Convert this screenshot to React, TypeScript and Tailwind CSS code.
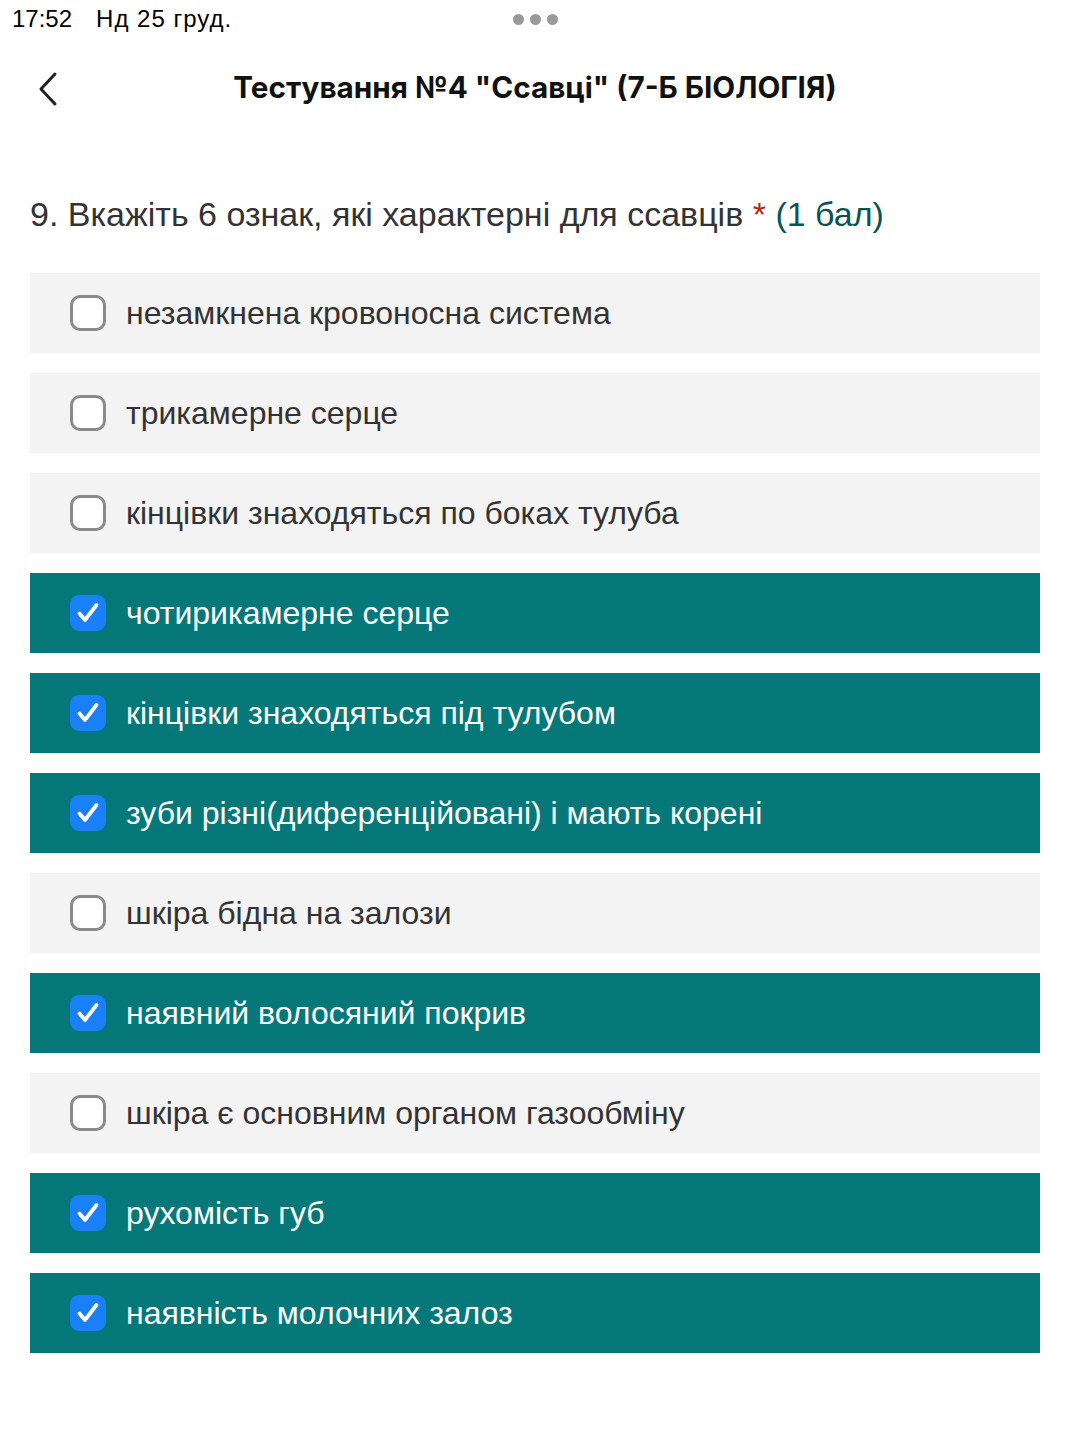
import React from "react";

const options: { text: string; checked: boolean }[] = [
  { text: "незамкнена кровоносна система", checked: false },
  { text: "трикамерне серце", checked: false },
  { text: "кінцівки знаходяться по боках тулуба", checked: false },
  { text: "чотирикамерне серце", checked: true },
  { text: "кінцівки знаходяться під тулубом", checked: true },
  { text: "зуби різні(диференційовані) і мають корені", checked: true },
  { text: "шкіра бідна на залози", checked: false },
  { text: "наявний волосяний покрив", checked: true },
  { text: "шкіра є основним органом газообміну", checked: false },
  { text: "рухомість губ", checked: true },
  { text: "наявність молочних залоз", checked: true },
];

function Box({ checked }: { checked: boolean }) {
  if (checked) {
    return (
      <div className="w-[36px] h-[36px] rounded-[9px] bg-[#1a80f8] flex items-center justify-center shrink-0">
        <svg width="28" height="28" viewBox="0 0 28 28" fill="none">
          <path d="M5.5 14.5 L11 21 L22.5 6" stroke="white" strokeWidth="3.8" strokeLinecap="round" strokeLinejoin="round" />
        </svg>
      </div>
    );
  }
  return <div className="w-[36px] h-[36px] rounded-[10px] border-[3px] border-[#8a8a8a] bg-white shrink-0" />;
}

export default function App() {
  return (
    <div className="w-[1070px] h-[1443px] bg-white overflow-hidden" style={{ fontFamily: '"Liberation Sans", Arial, sans-serif' }}>
      <div className="h-[38px] flex items-center px-[12px] relative">
        <span className="text-[24px] text-black">17:52</span>
        <span className="text-[24px] text-black ml-[24px] tracking-[1px]">Нд 25 груд.</span>
        <div className="absolute left-[513px] top-[14px] flex gap-[6px]">
          <div className="w-[11px] h-[11px] rounded-full bg-[#9a9a9a]" />
          <div className="w-[11px] h-[11px] rounded-full bg-[#9a9a9a]" />
          <div className="w-[11px] h-[11px] rounded-full bg-[#9a9a9a]" />
        </div>
      </div>
      <div className="h-[100px] relative flex items-center justify-center pb-[2px]">
        <svg className="absolute left-[36px] top-[33px]" width="24" height="36" viewBox="0 0 24 36" fill="none">
          <path d="M19 3 L5 18 L19 33" stroke="#222" strokeWidth="3" strokeLinecap="round" strokeLinejoin="round" />
        </svg>
        <div className="text-[29.7px] font-bold text-[#111]" style={{ fontFamily: 'Inter, "Liberation Sans", sans-serif' }}>
          Тестування №4 "Ссавці" (7-Б БІОЛОГІЯ)
        </div>
      </div>
      <div className="px-[30px] pt-[56px]">
        <div className="text-[34px] text-[#333] leading-[40px]">
          9. Вкажіть 6 ознак, які характерні для ссавців <span className="text-[#b3261e]">*</span>{" "}
          <span className="text-[#0b5352]">(1 бал)</span>
        </div>
        <div className="mt-[39px] flex flex-col gap-[20px]">
          {options.map((o) => (
            <div
              key={o.text}
              className={`h-[80px] flex items-center pl-[40px] gap-[20px] ${o.checked ? "bg-[#06787a] text-white" : "bg-[#f3f3f3] text-[#333]"}`}
            >
              <Box checked={o.checked} />
              <span className="text-[32px]">{o.text}</span>
            </div>
          ))}
        </div>
      </div>
    </div>
  );
}
